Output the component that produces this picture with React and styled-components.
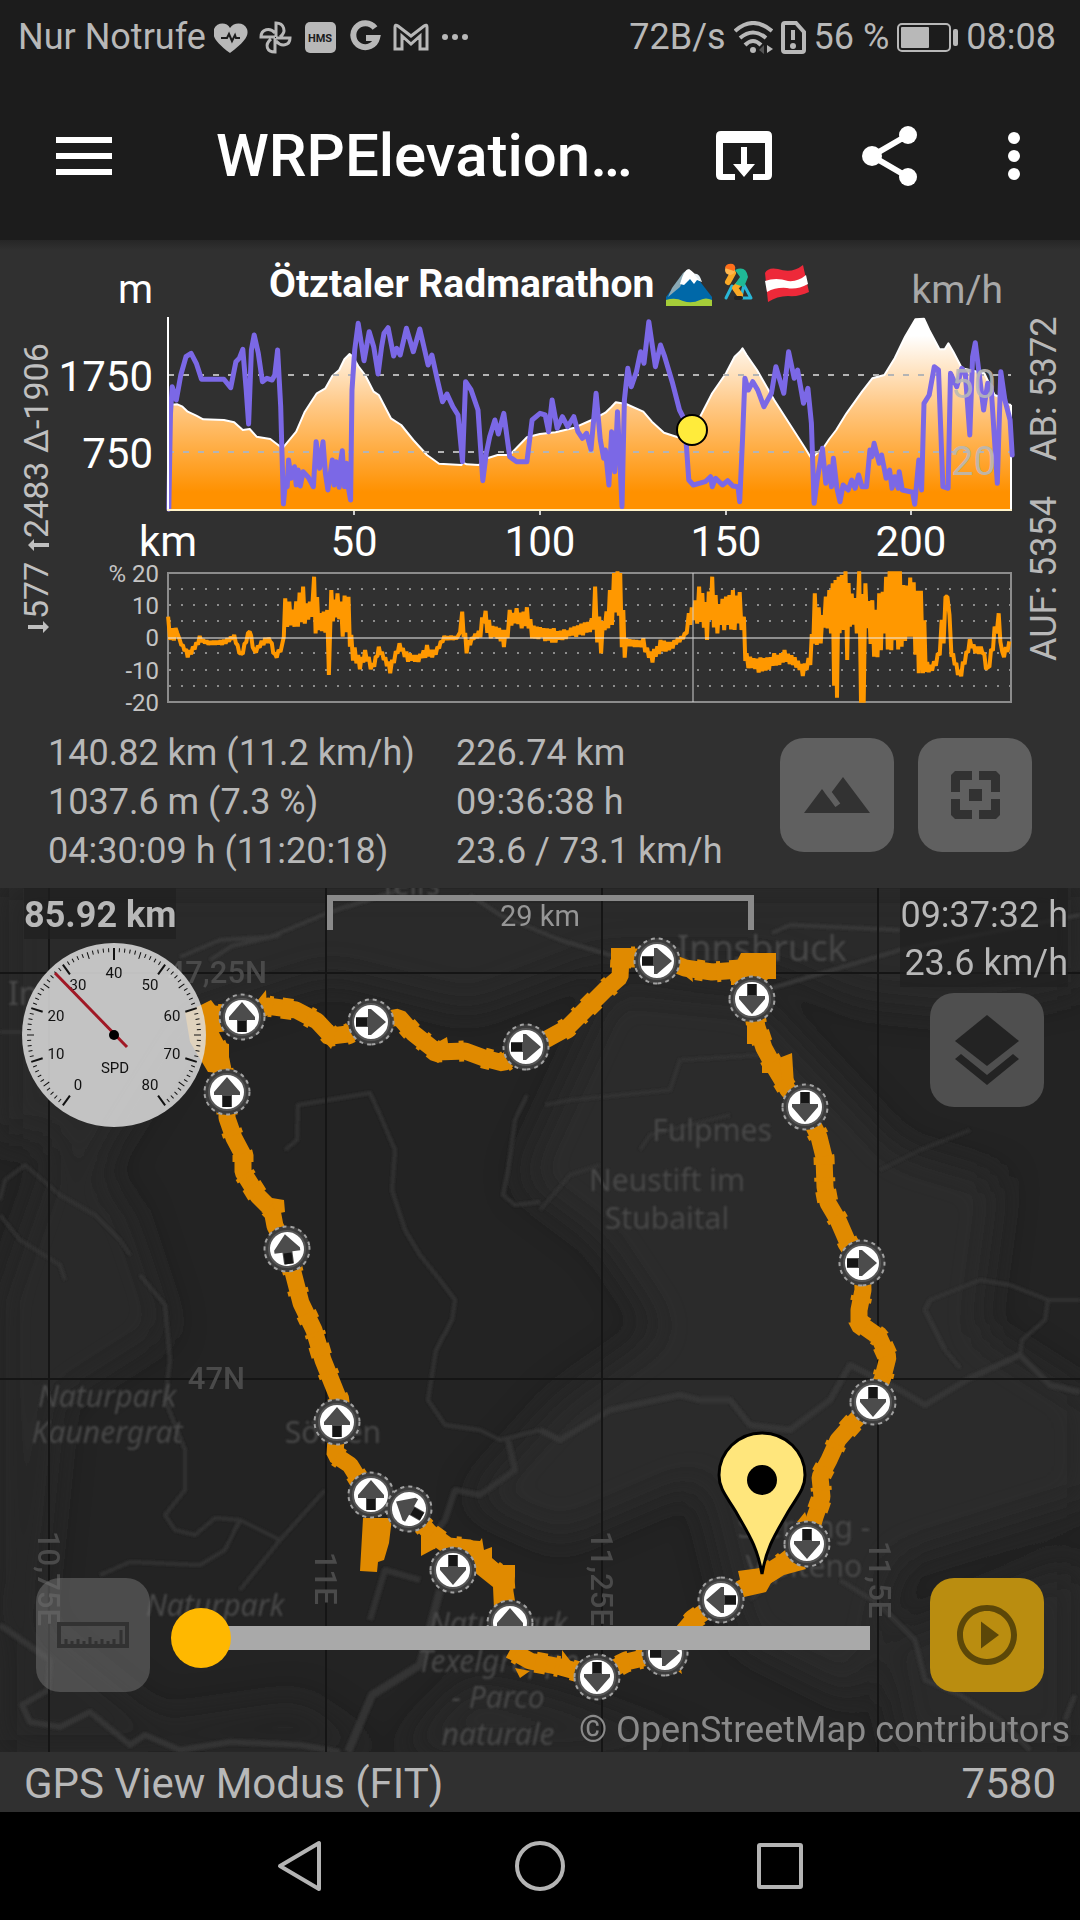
import React, { useState } from "react";
import styled, { createGlobalStyle } from "styled-components";

const GlobalStyle = createGlobalStyle`
  * {
    box-sizing: border-box;
  }

  body {
    margin: 0;
    background: #000000;
    color: #b8b8b8;
    font-family: Roboto, "Noto Sans", sans-serif;
    font-size: 36px;
  }

  button {
    border: 0;
    padding: 0;
    background: none;
    color: inherit;
    font: inherit;
    cursor: pointer;
  }

  svg {
    display: block;
  }
`;

const HALF = 1568;
const join = (first, second) => [
  ...first,
  ...second.map(([x, ...rest]) => [x + HALF, ...rest]),
];
const px = (x) => (x * 1080) / 3136;
const toPath = (points, top) =>
  points
    .map(([x, y], i) => `${i ? "L" : "M"}${px(x).toFixed(1)} ${(top + y / 3).toFixed(1)}`)
    .join("");

const ELEVATION = join(
  [[488,495],[515,493],[530,500],[545,515],[570,527],[590,538],[650,540],[680,547],[705,570],[725,567],[745,590],[785,597],[820,625],[860,575],[885,515],[920,460],[945,445],[965,408],[985,390],[1000,358],[1015,342],[1025,350],[1040,378],[1060,405],[1085,455],[1100,465],[1135,535],[1165,555],[1200,600],[1240,645],[1275,671],[1340,675],[1345,668],[1355,673],[1390,675],[1415,655],[1445,645],[1480,645],[1530,592]],
  [[0,582],[45,577],[100,563],[150,540],[190,518],[208,500],[220,487],[250,492],[300,515],[325,545],[360,578],[400,592],[430,560],[465,530],[500,460],[540,400],[565,350],[582,334],[588,325],[600,345],[630,390],[680,480],[730,560],[770,625],[785,650],[792,652],[825,620],[840,597],[860,570],[890,520],[935,455],[965,415],[1000,405],[1030,355],[1060,290],[1090,238],[1115,236],[1130,270],[1160,328],[1175,328],[1186,310],[1200,335],[1225,385],[1290,400],[1320,465],[1345,475],[1355,492],[1368,495]]
);

const SPEED = join(
  [[490,808],[495,520],[500,440],[512,480],[525,405],[540,350],[555,340],[570,370],[585,418],[650,418],[670,443],[685,365],[695,355],[705,328],[715,450],[722,552],[730,330],[738,285],[750,340],[762,425],[775,415],[790,420],[798,405],[806,330],[815,500],[823,792],[828,735],[834,740],[838,660],[845,715],[855,680],[860,735],[866,690],[872,738],[880,695],[895,712],[910,740],[918,605],[928,685],[938,605],[945,700],[952,750],[965,660],[970,735],[976,665],[985,742],[988,670],[994,632],[1000,740],[1006,670],[1012,745],[1018,780],[1022,450],[1030,330],[1040,250],[1057,362],[1072,275],[1085,320],[1098,402],[1108,320],[1115,280],[1127,263],[1143,348],[1152,325],[1162,345],[1180,265],[1200,335],[1219,267],[1243,375],[1254,345],[1270,420],[1285,485],[1298,462],[1315,500],[1330,525],[1343,665],[1352,425],[1368,450],[1388,510],[1402,722],[1412,640],[1422,590],[1437,540],[1447,582],[1463,520],[1480,650],[1500,665],[1530,665],[1545,540]],
  [[0,520],[15,525],[25,575],[35,480],[50,565],[65,530],[80,560],[98,530],[110,575],[123,595],[135,580],[148,628],[163,460],[175,600],[185,655],[190,630],[200,735],[208,575],[217,695],[225,515],[238,800],[245,480],[255,385],[265,440],[280,395],[292,335],[302,370],[316,245],[335,380],[350,315],[362,350],[385,430],[405,510],[420,540],[432,720],[445,735],[480,725],[495,710],[500,740],[510,715],[530,735],[545,722],[560,738],[575,740],[580,785],[588,600],[595,415],[605,450],[618,425],[632,450],[650,500],[672,460],[685,380],[708,460],[722,335],[738,415],[748,390],[765,490],[778,445],[788,550],[796,790],[805,720],[820,625],[830,730],[840,680],[846,740],[852,655],[862,745],[871,785],[880,735],[895,750],[905,720],[915,745],[925,705],[935,740],[948,740],[958,630],[964,650],[970,610],[985,670],[992,645],[1005,715],[1015,690],[1022,745],[1030,710],[1040,745],[1043,695],[1052,750],[1082,757],[1088,793],[1100,660],[1108,750],[1115,490],[1130,465],[1145,380],[1157,390],[1170,740],[1185,745],[1192,400],[1210,440],[1225,385],[1235,400],[1248,585],[1256,350],[1264,308],[1275,400],[1288,510],[1300,430],[1310,440],[1328,730],[1338,395],[1350,480],[1365,540],[1371,645]]
);

/* Slope envelope: [x, upper, lower] */
const SLOPE = join(
  [[488,200,285],[500,235,285],[515,225,250],[522,270,280],[545,300,322],[560,290,310],[580,258,275],[600,272,285],[650,270,285],[680,255,265],[700,310,330],[725,232,245],[738,300,315],[765,262,285],[785,262,275],[798,310,332],[820,280,300],[828,145,240],[840,155,245],[855,165,230],[865,110,230],[880,110,225],[890,160,235],[905,150,200],[912,80,280],[925,165,240],[940,185,250],[950,180,250],[955,60,375],[962,120,250],[980,130,215],[995,135,260],[1012,140,250],[1020,255,330],[1045,320,358],[1060,300,330],[1082,340,372],[1100,290,310],[1133,340,370],[1160,280,300],[1185,310,335],[1215,310,335],[1240,285,325],[1260,300,325],[1290,258,270],[1330,258,268],[1342,185,240],[1355,270,310],[1375,255,268],[1395,235,262],[1405,155,220],[1420,210,275],[1435,225,260],[1468,240,300],[1480,180,240],[1500,175,230],[1530,172,240],[1545,225,265]],
  [[0,232,268],[40,235,285],[65,240,270],[100,230,262],[150,205,250],[160,110,230],[172,200,345],[188,210,240],[203,120,270],[215,69,240],[225,64,200],[233,69,260],[242,180,378],[250,265,290],[300,265,300],[322,305,343],[350,270,315],[385,270,295],[420,250,265],[432,190,240],[445,155,210],[462,110,235],[485,130,270],[500,80,230],[515,145,250],[540,140,245],[560,120,240],[585,95,240],[592,200,340],[600,310,360],[650,325,372],[680,310,350],[710,300,340],[735,310,345],[763,340,378],[785,310,345],[798,130,290],[815,190,280],[830,140,240],[845,100,250],[850,100,445],[858,90,470],[867,80,480],[870,95,250],[882,50,240],[892,50,330],[900,100,230],[920,130,250],[927,50,270],[932,50,470],[940,50,480],[945,100,240],[970,160,320],[985,130,355],[1000,90,250],[1015,50,330],[1050,50,290],[1070,75,260],[1080,50,260],[1100,50,370],[1112,100,370],[1120,320,365],[1133,345,378],[1155,310,340],[1172,150,280],[1183,90,140],[1195,290,320],[1218,360,400],[1248,268,290],[1270,290,320],[1285,290,310],[1300,350,382],[1320,230,290],[1332,190,230],[1342,305,330],[1368,260,300]]
);

const slopePath = () => {
  const out = [];
  let seed = 7;
  let up = true;
  for (let i = 1; i < SLOPE.length; i++) {
    const [x0, a0, b0] = SLOPE[i - 1];
    const [x1, a1, b1] = SLOPE[i];
    const steps = Math.max(1, Math.round((x1 - x0) / 5));
    for (let s = 0; s < steps; s++) {
      const t = s / steps;
      const upper = a0 + (a1 - a0) * t;
      const lower = b0 + (b1 - b0) * t;
      seed = (seed * 16807) % 2147483647;
      const pull = (seed / 2147483647) * 0.25 * (s ? 1 : 0) * (lower - upper);
      const y = up ? upper + pull : lower - pull;
      out.push([x0 + (x1 - x0) * t, Math.min(458, Math.max(64, y))]);
      up = !up;
    }
  }
  return toPath(out, 550);
};

const elevationLine = toPath(ELEVATION, 240);

function TitleEmoji() {
  return (
    <g>
      <path d="M666 297 L681 277 Q688 269 695 275 L712 297 V306 H666Z" fill="#0068a8" />
      <path d="M672 288 L683 273 L688 269 L680 287 L668 297Z" fill="#8aa9b5" />
      <path d="M680 284 Q684 269 689 269 Q694 272 702 282 L697 280 L694 284 L690 279 L684 285Z" fill="#fff" />
      <path d="M694 274 Q699 272 702 282 L698 279Z" fill="#e8f1f5" />
      <path d="M666 300 Q675 297 683 301 Q692 304 700 300 Q706 297 712 300 V306 H666Z" fill="#a5cd39" />
      <g fill="none" strokeLinecap="round" strokeLinejoin="round">
        <path d="M726 298 L732 286 L738 291 M741 297 L744 285 L751 298 H742" stroke="#29b6d6" strokeWidth="3" />
        <path d="M733 273 L728 282 M741 282 L735 288 L740 295" stroke="#f9a825" strokeWidth="6" />
        <path d="M736 298 H741" stroke="#222" strokeWidth="4" />
      </g>
      <path d="M735 270 Q746 265 748 277 L744 287 L735 284 L740 277Z" fill="#1fb996" />
      <circle cx="730" cy="270" r="5" fill="#ffb74d" />
      <path d="M725 268 Q726 263 733 264 Q737 267 734 271Z" fill="#ff6f1a" />
      <path d="M765 273 Q768 267 778 269 Q792 274 803 265 L809 292 Q799 297 788 296 Q777 296 768 302 Z" fill="#ed2939" />
      <path d="M765 281 Q776 277 788 281 Q798 282 806 275 L808 284 Q797 290 787 288 Q776 287 767 292Z" fill="#fff" />
    </g>
  );
}

function RideChart() {
  const gridRows = [589, 605, 621, 653, 670, 686];
  return (
    <ChartSvg viewBox="0 240 1080 489" role="img" aria-label="Höhenprofil Ötztaler Radmarathon">
      <defs>
        <linearGradient id="elevation" gradientUnits="userSpaceOnUse" x1="0" y1="318" x2="0" y2="492">
          <stop offset="0.1" stopColor="#ffffff" />
          <stop offset="0.5" stopColor="#ffc987" />
          <stop offset="1" stopColor="#ff9100" />
        </linearGradient>
      </defs>

      <g fill="#ffffff">
        <text x="269" y="297" fontSize="39" fontWeight="700">Ötztaler Radmarathon</text>
        <g fontSize="42">
          <text x="153" y="303" textAnchor="end" fontSize="40">m</text>
          <text x="153" y="391" textAnchor="end">1750</text>
          <text x="153" y="468" textAnchor="end">750</text>
          <g textAnchor="middle">
            <text x="168" y="556">km</text>
            <text x="354" y="556">50</text>
            <text x="540" y="556">100</text>
            <text x="726" y="556">150</text>
            <text x="911" y="556">200</text>
          </g>
        </g>
      </g>
      <TitleEmoji />
      <text x="1003" y="303" textAnchor="end" fontSize="39" fill="#a8a8a8">km/h</text>

      <path d={`${elevationLine}V509H168Z`} fill="url(#elevation)" />
      <path d={elevationLine} fill="none" stroke="#ffffff" strokeWidth="2" strokeLinejoin="round" />
      <path d="M1011 405V510" stroke="#ffffff" strokeWidth="2" />
      <path d="M168 375H1011M168 452H1011" stroke="#b4b4b4" strokeWidth="2" strokeDasharray="6 9" />
      <path d={toPath(SPEED, 240)} fill="none" stroke="#7b68e6" strokeWidth="5" strokeLinejoin="round" strokeLinecap="round" />
      <path d="M168 317V510" stroke="#ffffff" strokeWidth="2" />
      <path d="M167 510H1012" stroke="#fff3c8" strokeWidth="2" />
      <path d="M354 511v4M540 511v4M726 511v4M911 511v4" stroke="#cccccc" strokeWidth="2" />
      <g fill="#b8b8b8" fillOpacity="0.9" fontSize="40" textAnchor="end">
        <text x="996" y="398">50</text>
        <text x="996" y="475">20</text>
      </g>
      <circle cx="692" cy="430" r="15" fill="#ffeb3b" stroke="#000000" strokeWidth="2" />

      <g stroke="#8c8c8c" fill="none">
        {gridRows.map((y) => (
          <path key={y} d={`M169 ${y}H1011`} strokeWidth="2" strokeDasharray="2 10" />
        ))}
        <rect x="168" y="573" width="843" height="129" strokeWidth="2" />
      </g>
      <path d={slopePath()} fill="none" stroke="#ff9800" strokeWidth="4" strokeLinejoin="bevel" />
      <path d="M168 638H1011" stroke="#eeeeee" strokeWidth="1" />
      <path d="M693 573V702" stroke="#d0d0d0" strokeWidth="1" />
      <g fill="#c4c4c4" fontSize="24" textAnchor="end">
        <text x="159" y="582">% 20</text>
        <text x="159" y="614">10</text>
        <text x="159" y="646">0</text>
        <text x="159" y="679">-10</text>
        <text x="159" y="711">-20</text>
      </g>

      <g fill="#c0c0c0" fontSize="34">
        <text transform="translate(48 619) rotate(-90)">577</text>
        <text transform="translate(48 538) rotate(-90)">2483</text>
        <text transform="translate(48 453) rotate(-90)">Δ-1906</text>
        <path d="M28 625h15v-4l6 6-6 6v-4H28zM49 543H34v-4l-6 6 6 6v-4h15z" />
      </g>
      <g fill="#b8b8b8" fontSize="36">
        <text transform="translate(1056 661) rotate(-90)">AUF: 5354</text>
        <text transform="translate(1056 461) rotate(-90)">AB: 5372</text>
      </g>
    </ChartSvg>
  );
}

const ROUTE = [
  "M242 1017L214 1014 208 1030 216 1045 221 1060 224 1075 227 1092 227 1118 234 1138 243 1155 243 1172 258 1196 272 1210 275 1226 287 1249 293 1272 301 1303 314 1330 323 1360 333 1385 339 1400 337 1422 335 1455 350 1465 358 1478 371 1495",
  "M250 1015L267 1006 296 1010 317 1021 331 1036 348 1034 371 1022 399 1017 413 1033 437 1052 465 1051 484 1058 503 1063 526 1047 547 1039 567 1028 585 1010 605 990 620 977 621 957 657 957 685 968 712 972 740 970",
  "M752 999L757 1027 764 1048 776 1070 788 1090 804 1107 819 1137 824 1157 825 1187 828 1203 838 1220 848 1243 862 1263 863 1290 859 1310 859 1323 879 1337 888 1357 883 1377 873 1402 853 1423 838 1440 829 1460 820 1477 822 1497 815 1517 807 1544 781 1564 753 1582 721 1600 693 1620 665 1653 626 1662 597 1677 561 1667 530 1661 510 1650",
  "M409 1509L430 1533 448 1546 470 1548 482 1562 504 1578 505 1592 510 1623",
];

const MARKERS = [
  [242, 1017, 0], [371, 1022, 90], [526, 1047, 90], [227, 1092, 0], [287, 1249, -8],
  [657, 961, 90], [752, 999, 180], [805, 1107, 180], [862, 1263, 90], [873, 1402, 180],
  [807, 1544, 180], [721, 1600, -90], [665, 1653, 90], [597, 1677, 180], [337, 1422, 0],
  [371, 1495, 0], [453, 1570, 180], [409, 1509, -60], [510, 1623, 0],
];

const MERIDIANS = [49, 326, 602, 878];

function DirectionMarker({ x, y, angle }) {
  return (
    <g transform={`translate(${x} ${y}) rotate(${angle})`}>
      <circle r="23" fill="#3c3c3c" />
      <circle r="22.5" fill="none" stroke="#a2a2a2" strokeWidth="2" strokeDasharray="4 4" />
      <circle r="18" fill="#ffffff" stroke="#555555" strokeWidth="2" />
      <path d="M0 -15 L13 0 V3 H5 V15 H-5 V3 H-13 V0Z" fill="#4c4c4c" />
      <path d="M-4 4H4V15H-4Z" fill="#161616" />
    </g>
  );
}

function TrackMap() {
  return (
    <MapSvg viewBox="0 888 1080 864" role="img" aria-label="Karte mit Strecke">
      <defs>
        <filter id="terrain" x="-20%" y="-20%" width="140%" height="140%">
          <feGaussianBlur stdDeviation="18" />
        </filter>
        <filter id="soft" x="-5%" y="-5%" width="110%" height="110%">
          <feGaussianBlur stdDeviation="1" />
        </filter>
      </defs>
      <rect y="888" width="1080" height="864" fill="#232323" />

      <g filter="url(#terrain)" fill="#2d2d2d">
        <path d="M0 880H1080V985L960 1010 860 1000 770 960 600 960 470 1010 330 975 190 1020 90 1180 40 1130 0 1150Z" opacity="0.8" />
        <path d="M610 985L760 1000 900 1150 1000 1180 980 1330 1090 1400V1500L900 1560 860 1700 740 1640 700 1480 560 1540 470 1500 560 1400 660 1330 600 1240 520 1180Z" opacity="0.7" />
        <path d="M60 1130L130 1210 170 1330 60 1400 40 1600 0 1640V1300Z" opacity="0.6" />
        <path d="M0 1580L60 1640 160 1720 300 1700 380 1752H0Z" opacity="0.5" />
        <path d="M400 1752L470 1680 560 1700 700 1752ZM880 1640L1080 1560V1752H900Z" opacity="0.8" />
      </g>

      <g filter="url(#soft)" fill="none" stroke="#383838" strokeWidth="4" strokeLinejoin="round">
        <path d="M180 957L220 940 270 937 330 912 400 890M210 960L232 946 280 935" />
        <path d="M470 895L500 915 560 940 610 955 680 950M772 933L790 925 900 930M772 988L900 950 1080 915" />
        <path d="M0 1200L5 1180 25 1165 60 1195 95 1215 120 1240 130 1255M0 1215L20 1240 60 1265 65 1280" opacity="0.6" />
        <path d="M0 1032H22M285 1150L297 1140 298 1105 370 1093 380 1115 395 1150 392 1190 405 1230 420 1255 440 1280 455 1300 452 1320 436 1350 428 1400 445 1425 480 1430 500 1440 540 1430" opacity="0.7" />
        <path d="M527 1095L515 1120 508 1170 503 1195 515 1205 540 1202" opacity="0.7" />
        <path d="M540 1430L560 1440 610 1410 680 1395 700 1400 730 1400 750 1425 790 1430 830 1400 850 1365 900 1390 925 1405 970 1378 1020 1355 1050 1385 1080 1392" strokeWidth="6" opacity="0.8" />
        <path d="M1020 1355L1022 1340 1045 1320 1048 1300 1010 1285 980 1280 930 1300 925 1310 945 1350 960 1368M1048 1300L1080 1300" opacity="0.7" />
        <path d="M140 1275L165 1305 170 1360 165 1400 185 1450 185 1490 165 1515 175 1530 195 1535 215 1518 240 1520 280 1540M240 1520L225 1550 200 1565 130 1562 100 1575M325 1490L280 1540 240 1590" opacity="0.7" />
        <path d="M508 1440L515 1470 480 1495 455 1490 445 1520 430 1540M370 1620L385 1570 420 1580" strokeWidth="6" opacity="0.7" />
        <path d="M348 1752L372 1695 420 1665 440 1590" strokeWidth="8" opacity="0.8" />
        <path d="M0 1625L50 1660 48 1690 22 1705 30 1722 60 1727 90 1712 130 1745 145 1735 180 1750 230 1742 300 1745 340 1752" strokeWidth="6" opacity="0.8" />
        <path d="M540 1210L570 1175 600 1165M545 1105L570 1100 670 1090 680 1060 760 1055M640 1150L650 1135 730 1115" opacity="0.5" />
        <path d="M840 1580L880 1605 915 1640 925 1680 960 1695 1000 1720 1030 1750M1065 1720L1075 1695" strokeWidth="5" opacity="0.8" />
        <path d="M880 1170L920 1150 970 1130M750 1600L800 1560" opacity="0.5" />
      </g>

      <g filter="url(#soft)" fill="#484848" fontFamily='"Noto Sans", "Open Sans", sans-serif' fontSize="30">
        <text x="380" y="895" fontSize="28">Telfs</text>
        <text x="8" y="1005" fontSize="32">In</text>
        <text x="677" y="961" fontSize="36">Innsbruck</text>
        <text x="712" y="1141" textAnchor="middle">Fulpmes</text>
        <text x="667" y="1191" textAnchor="middle">Neustift im</text>
        <text x="667" y="1229" textAnchor="middle">Stubaital</text>
        <text x="333" y="1443" textAnchor="middle">Sölden</text>
        <text x="804" y="1538" textAnchor="middle">Sterzing -</text>
        <text x="804" y="1577" textAnchor="middle">Vipiteno</text>
        <g fontStyle="italic">
          <text x="107" y="1407" textAnchor="middle">Naturpark</text>
          <text x="107" y="1443" textAnchor="middle">Kaunergrat</text>
          <text x="215" y="1616" textAnchor="middle">Naturpark</text>
          <text x="498" y="1634" textAnchor="middle">Naturpark</text>
          <text x="498" y="1672" textAnchor="middle">Texelgruppe</text>
          <text x="498" y="1708" textAnchor="middle">- Parco</text>
          <text x="498" y="1745" textAnchor="middle">naturale</text>
        </g>
      </g>

      <g stroke="#151515" strokeWidth="2">
        {MERIDIANS.map((x) => (
          <path key={x} d={`M${x} 888V1752`} />
        ))}
        <path d="M0 973H1080M0 1379H1080" />
      </g>
      <g fill="#4a4a4a" fontSize="31" fontWeight="500">
        <text x="267" y="983" textAnchor="end">47,25N</text>
        <text x="245" y="1389" textAnchor="end">47N</text>
        <text transform="translate(38 1531) rotate(90)">10,75E</text>
        <text transform="translate(315 1552) rotate(90)">11E</text>
        <text transform="translate(591 1531) rotate(90)">11,25E</text>
        <text transform="translate(869 1541) rotate(90)">11,5E</text>
      </g>

      <g fill="none" stroke="#e08a00" strokeLinejoin="bevel">
        {ROUTE.map((d) => (
          <g key={d}>
            <path d={d} strokeWidth="17" />
            <path d={d} strokeWidth="21" strokeDasharray="8 13 4 9 11 17 5 21" />
          </g>
        ))}
      </g>
      <g fill="#e08a00">
        <path d="M185 1012l14-6 12-6 6 8 18 6v16l-22 3 8 9 8 2v16l3 14-24-2-18-30zM258 1000l8-10 1 20zM325 1042l6 7 4-10zM438 1042l9-5 2 12zM430 1057l8 6 8-6zM611 948h24v17h-24zM741 953h35v26h-8l-5 6h-32v-12z" />
        <path d="M680 972l13 10-1-9zM747 1024h13v20h-13zM779 1058l13-5 2 32-12-6zM762 1055h10v18h-10zM272 1198l12 2 1 12-10 2zM363 1518h29l-3 25-5 17-6 2-1 10-17-1 2-35zM421 1535l0 21 15-8zM446 1543l20-3 14 1 2-3 2 12 8-3v11l8 7h15v12l-5 32h-16l-1-22-20-16z" />
        <path d="M738 1571l30-4 12-13h16l10 15-22 6-13 8-5 9-22 5zM515 1668l5 10 10-7zM562 1650l10 13-10 2zM672 1667l10 7-2-9zM805 1512l-8 10 12 2z" />
      </g>

      {MARKERS.map(([x, y, angle]) => (
        <DirectionMarker key={`${x}-${y}`} x={x} y={y} angle={angle} />
      ))}

      <path
        d="M762 1574C757 1545 747 1532 736 1512C727 1497 719 1489 719 1475A43 42 0 0 1 805 1475C805 1489 797 1497 788 1512C777 1532 767 1545 762 1574Z"
        fill="#ffe67c"
        stroke="#000000"
        strokeWidth="3"
      />
      <circle cx="762" cy="1480" r="15" fill="#000000" />
    </MapSvg>
  );
}

function SpeedGauge() {
  const ticks = [];
  for (let v = 0; v <= 80; v++) {
    const length = v % 10 === 0 ? 12 : v % 5 === 0 ? 7 : 4;
    ticks.push(
      <path
        key={v}
        d={`M0 -87v${length}`}
        strokeWidth={v % 10 === 0 ? 2 : 1}
        transform={`rotate(${(v - 40) * 3.6})`}
      />
    );
  }
  return (
    <svg width="184" height="184" viewBox="-92 -92 184 184" role="img" aria-label="Geschwindigkeit">
      <circle r="92" fill="#dedede" fillOpacity="0.85" />
      <g stroke="#111111">{ticks}</g>
      <g fill="#111111" fontSize="15" textAnchor="middle">
        {[0, 10, 20, 30, 40, 50, 60, 70, 80].map((v) => {
          const a = ((v - 40) * 3.6 * Math.PI) / 180;
          return (
            <text key={v} x={Math.round(Math.sin(a) * 61)} y={Math.round(5 - Math.cos(a) * 62)}>
              {v}
            </text>
          );
        })}
        <text x="1" y="38">SPD</text>
      </g>
      <path d="M-59 -62L13 12" stroke="#a01825" strokeWidth="3" />
      <circle r="5" fill="#000000" />
    </svg>
  );
}

function StatusIcons() {
  return (
    <NoticeIcons viewBox="214 18 256 36" aria-hidden="true">
      <path d="M230 52C214 40 212 34 214 28 217 21 227 21 230 27 234 21 244 21 247 28 249 34 246 40 230 52Z" fill="#b8b8b8" />
      <path d="M221 37h6l2-4 3 7 3-6 1 3h4" fill="none" stroke="#1c1c1c" strokeWidth="2" />
      <g fill="none" stroke="#b8b8b8" strokeWidth="3">
        <path d="M276 36V22c8 0 11 9 4 14M276 37h14c0 8-9 9-14 3M275 37v14c-8 0-11-7-4-13M275 36h-14c0-8 9-10 14-4" />
      </g>
      <rect x="305" y="21" width="31" height="31" rx="5" fill="#b8b8b8" />
      <text x="320" y="41" fontSize="11" fontWeight="700" textAnchor="middle" fill="#1c1c1c">HMS</text>
      <path d="M375 27A12 12 0 1 0 377 37H366" fill="none" stroke="#b8b8b8" strokeWidth="6" />
      <path d="M395 48V26q0-3 3-1l13 10 13-10q3-2 3 1V48h-7V35l-9 8-9-8V48Z" fill="none" stroke="#b8b8b8" strokeWidth="3" />
      <g fill="#b8b8b8">
        <circle cx="445" cy="36" r="3" />
        <circle cx="455" cy="36" r="3" />
        <circle cx="465" cy="36" r="3" />
      </g>
    </NoticeIcons>
  );
}

export default function App() {
  const [position, setPosition] = useState(0);

  return (
    <Screen>
      <GlobalStyle />
      <StatusBar>
        <span>Nur Notrufe</span>
        <StatusIcons />
        <Spacer />
        <span>72B/s</span>
        <svg width="39" height="33" viewBox="0 0 39 33" aria-hidden="true">
          <g fill="none" stroke="#b8b8b8" strokeWidth="4">
            <path d="M1 10Q19 -6 38 10M6 17Q19 6 32 17M11 24Q19 16 27 24" />
          </g>
          <circle cx="19" cy="29" r="3" fill="#b8b8b8" />
          <path d="M30 24v9l-5-4z" fill="#555555" />
          <path d="M33 24v8l6-4z" fill="#b8b8b8" />
        </svg>
        <svg width="25" height="33" viewBox="0 0 25 33" aria-hidden="true">
          <path d="M4 2H15L23 11V29q0 2-2 2H4q-2 0-2-2V4q0-2 2-2z" fill="none" stroke="#b8b8b8" strokeWidth="4" />
          <path d="M12 9V19" stroke="#b8b8b8" strokeWidth="4" />
          <circle cx="12" cy="25" r="3" fill="#b8b8b8" />
        </svg>
        <span>56 %</span>
        <svg width="61" height="29" viewBox="0 0 61 29" aria-hidden="true">
          <rect x="1" y="1" width="52" height="27" rx="4" fill="none" stroke="#b8b8b8" strokeWidth="2" />
          <rect x="4" y="4" width="28" height="21" rx="1" fill="#b8b8b8" />
          <rect x="56" y="6" width="5" height="17" rx="2" fill="#b8b8b8" />
        </svg>
        <span>08:08</span>
      </StatusBar>

      <AppBar>
        <button aria-label="Menü">
          <svg width="56" height="38" fill="#ffffff">
            <path d="M0 0h56v6H0zM0 16h56v6H0zM0 32h56v6H0z" />
          </svg>
        </button>
        <Title>WRPElevation…</Title>
        <button aria-label="Importieren">
          <svg width="56" height="50" viewBox="0 0 56 50" fill="#ffffff">
            <path d="M5 0h46q5 0 5 5v39q0 5-5 5H37v-6h12V12H7v31h12v6H5q-5 0-5-5V5q0-5 5-5z" />
            <path d="M25 16h6v17h8L28 46 17 33h8z" />
          </svg>
        </button>
        <button aria-label="Teilen">
          <svg width="56" height="62" viewBox="0 0 56 62" fill="#ffffff">
            <path d="M46 10L10 31L46 52" fill="none" stroke="#ffffff" strokeWidth="6" />
            <circle cx="46" cy="10" r="9" />
            <circle cx="10" cy="31" r="10" />
            <circle cx="46" cy="52" r="9" />
          </svg>
        </button>
        <button aria-label="Weitere Optionen">
          <svg width="12" height="48" fill="#ffffff">
            <circle cx="6" cy="6" r="6" />
            <circle cx="6" cy="24" r="6" />
            <circle cx="6" cy="42" r="6" />
          </svg>
        </button>
      </AppBar>

      <ProfilePanel>
        <RideChart />
        <Summary>
          <div>
            <Line>140.82 km (11.2 km/h)</Line>
            <Line>1037.6 m (7.3 %)</Line>
            <Line>04:30:09 h (11:20:18)</Line>
          </div>
          <div>
            <Line>226.74 km</Line>
            <Line>09:36:38 h</Line>
            <Line>23.6 / 73.1 km/h</Line>
          </div>
          <Tiles>
            <Tile aria-label="Höhenprofil">
              <svg width="72" height="72" viewBox="0 0 24 24" fill="#323232">
                <path d="M14 6l-3.75 5 2.85 3.8-1.6 1.2C9.81 13.75 7 10 7 10l-6 8h22L14 6z" />
              </svg>
            </Tile>
            <Tile aria-label="Zentrieren">
              <svg width="49" height="48" viewBox="0 0 49 48" fill="#323232">
                <path d="M4 0H21V9H9V21H0V4zM28 0H45L49 4V21H40V9H28zM0 28H9V39H21V48H4L0 44zM40 28H49V44L45 48H28V39H40zM18 18H31V30H18z" />
              </svg>
            </Tile>
          </Tiles>
        </Summary>
      </ProfilePanel>

      <MapPanel>
        <TrackMap />
        <Overlay>
          <Readouts>
            <LeftColumn>
              <Reading $bold>85.92 km</Reading>
              <SpeedGauge />
            </LeftColumn>
            <ScaleBar>29 km</ScaleBar>
            <RightColumn>
              <Reading>09:37:32 h<br />23.6 km/h</Reading>
              <LayerTile aria-label="Kartenebenen">
                <svg width="66" height="70" viewBox="0 0 66 70" fill="#232323">
                  <path d="M33 0L65 26L33 51L1 26Z" />
                  <path d="M1 44L7 39L33 60L59 39L65 44L33 70Z" />
                </svg>
              </LayerTile>
            </RightColumn>
          </Readouts>

          <div>
            <Controls>
              <Tile $dim aria-label="Messen">
                <svg width="72" height="26" viewBox="0 0 72 26" fill="none" stroke="#323232">
                  <rect x="2" y="2" width="68" height="22" strokeWidth="4" />
                  <path d="M9 24v-7M15 24v-5M21 24v-7M27 24v-5M33 24v-9M39 24v-5M45 24v-7M51 24v-5M57 24v-7M64 24V8" strokeWidth="3" />
                </svg>
              </Tile>
              <Slider
                type="range"
                min="0"
                max="7580"
                value={position}
                onChange={(e) => setPosition(Number(e.target.value))}
                aria-label="Position"
              />
              <Tile $accent aria-label="Abspielen">
                <svg width="72" height="72" viewBox="0 0 24 24" fill="#5c4708">
                  <path d="M10 16.5l6-4.5-6-4.5v9zM12 2C6.48 2 2 6.48 2 12s4.48 10 10 10 10-4.48 10-10S17.52 2 12 2zm0 18c-4.41 0-8-3.59-8-8s3.59-8 8-8 8 3.59 8 8-3.59 8-8 8z" />
                </svg>
              </Tile>
            </Controls>
            <Attribution>© OpenStreetMap contributors</Attribution>
          </div>
        </Overlay>
      </MapPanel>

      <ModeBar>
        <span>GPS View Modus (FIT)</span>
        <span>7580</span>
      </ModeBar>

      <NavBar>
        <button aria-label="Zurück">
          <svg width="50" height="52" viewBox="0 0 50 52">
            <path d="M44 3V49L5 26Z" />
          </svg>
        </button>
        <button aria-label="Startbildschirm">
          <svg width="50" height="52" viewBox="0 0 50 52">
            <circle cx="25" cy="26" r="23" />
          </svg>
        </button>
        <button aria-label="Letzte Apps">
          <svg width="50" height="52" viewBox="0 0 50 52">
            <rect x="4" y="5" width="42" height="42" rx="1" />
          </svg>
        </button>
      </NavBar>
    </Screen>
  );
}

const Screen = styled.div`
  display: flex;
  flex-direction: column;
  min-height: 100vh;
`;

const StatusBar = styled.div`
  display: flex;
  align-items: center;
  gap: 8px;
  height: 74px;
  padding: 0 24px 0 18px;
  background: #1c1c1c;
  white-space: nowrap;
`;

const NoticeIcons = styled.svg`
  width: 256px;
  height: 36px;
`;

const Spacer = styled.div`
  flex: 1;
`;

const AppBar = styled.header`
  display: flex;
  align-items: center;
  gap: 90px;
  height: 166px;
  padding: 0 60px 2px 56px;
  background: #1c1c1c;
  color: #ffffff;
`;

const Title = styled.h1`
  flex: 1;
  margin: 0 -90px 0 14px;
  font-size: 60px;
  font-weight: 500;
  line-height: 70px;
  white-space: nowrap;
`;

const ProfilePanel = styled.section`
  background: linear-gradient(#262626, #303030 10px);
`;

const ChartSvg = styled.svg`
  width: 100%;
`;

const Summary = styled.div`
  display: grid;
  grid-template-columns: 408fr 324fr auto;
  padding: 0 48px 12px;
`;

const Line = styled.p`
  margin: 0;
  line-height: 49px;
  white-space: nowrap;
`;

const Tiles = styled.div`
  display: flex;
  gap: 24px;
  padding-top: 9px;
`;

const Tile = styled.button`
  display: flex;
  flex: none;
  align-items: center;
  justify-content: center;
  width: 114px;
  height: 114px;
  border-radius: 24px;
  background: ${(props) =>
    props.$accent ? "#ba8d10" : props.$dim ? "rgba(112, 112, 112, 0.55)" : "#606060"};
`;

const LayerTile = styled(Tile)`
  margin: 2px 24px 0 0;
  background: #4f4f4f;
`;

const MapPanel = styled.section`
  display: grid;
`;

const MapSvg = styled.svg`
  grid-area: 1 / 1;
  width: 100%;
`;

const Overlay = styled.div`
  grid-area: 1 / 1;
  z-index: 1;
  display: flex;
  flex-direction: column;
  justify-content: space-between;
`;

const Readouts = styled.div`
  display: grid;
  grid-template-columns: 1fr 427px 1fr;
  padding: 0 12px;
`;

const LeftColumn = styled.div`
  padding-left: 10px;
`;

const RightColumn = styled.div`
  display: flex;
  flex-direction: column;
  align-items: flex-end;
`;

const Reading = styled.p`
  width: max-content;
  margin: 0 0 4px 2px;
  padding-top: 3px;
  background: rgba(32, 32, 32, 0.7);
  font-weight: ${(props) => (props.$bold ? 700 : 400)};
  line-height: 48px;
  text-align: right;
`;

const ScaleBar = styled.div`
  height: 35px;
  margin-top: 7px;
  border: 6px solid #8a8a8a;
  border-bottom: 0;
  color: #969696;
  font-size: 29px;
  line-height: 30px;
  text-align: center;
`;

const Controls = styled.div`
  display: flex;
  align-items: center;
  padding: 0 36px;
`;

const Slider = styled.input`
  flex: 1;
  min-width: 0;
  height: 60px;
  margin: 5px 60px 0 21px;
  appearance: none;
  background: none;

  &::-webkit-slider-runnable-track {
    height: 24px;
    background: linear-gradient(to right, transparent 30px, #a9a9a9 30px);
  }

  &::-webkit-slider-thumb {
    width: 60px;
    height: 60px;
    margin-top: -18px;
    border-radius: 50%;
    appearance: none;
    background: #ffb800;
  }
`;

const Attribution = styled.p`
  margin: 17px 0 1px;
  padding-right: 10px;
  color: #8a8a8a;
  line-height: 42px;
  text-align: right;
`;

const ModeBar = styled.footer`
  display: flex;
  align-items: center;
  justify-content: space-between;
  height: 60px;
  padding: 2px 24px 0;
  background: #303030;
  font-size: 42px;
`;

const NavBar = styled.nav`
  display: flex;
  flex: 1;
  align-items: center;
  justify-content: center;
  gap: 190px;
  min-height: 108px;

  svg {
    fill: none;
    stroke: #b4b4b4;
    stroke-width: 4px;
    stroke-linejoin: round;
  }
`;
